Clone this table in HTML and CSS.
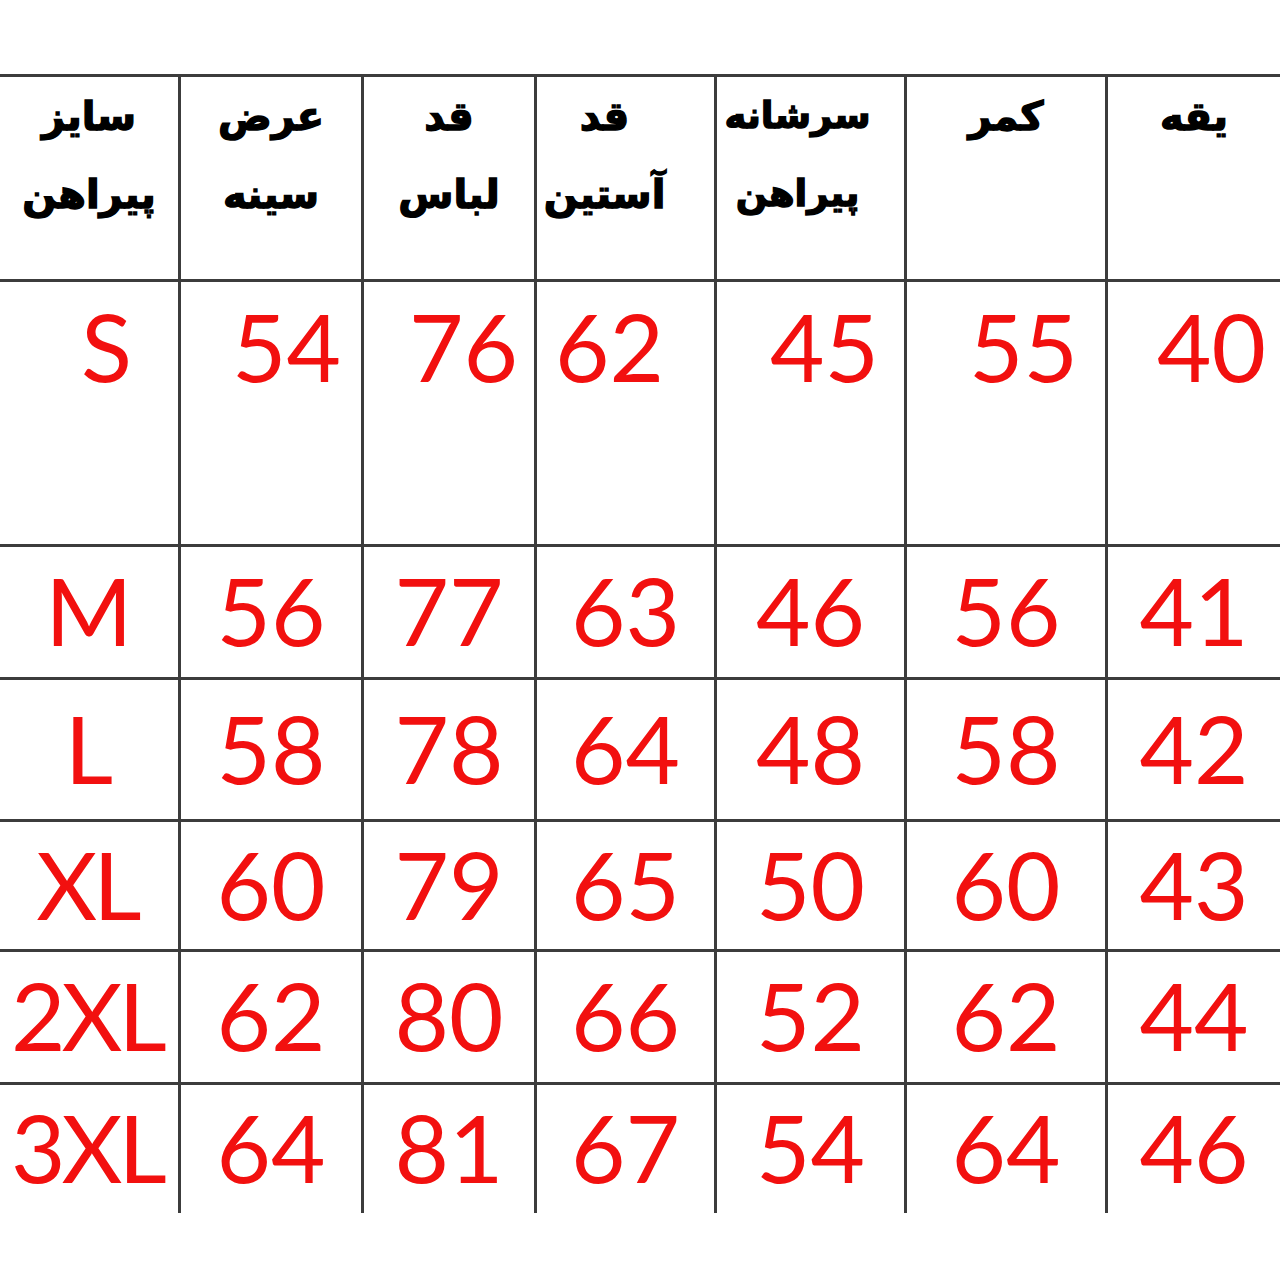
FILE: index.html
```html
<!DOCTYPE html>
<html lang="fa">
<head>
<meta charset="utf-8">
<title>جدول سایز پیراهن</title>
<link rel="stylesheet" href="styles.css">
</head>
<body>
<div class="chart">
  <div class="cell head"><span class="hl">سایز</span><span class="hl">پیراهن</span></div>
  <div class="cell head"><span class="hl">عرض</span><span class="hl">سینه</span></div>
  <div class="cell head"><span class="hl">قد</span><span class="hl">لباس</span></div>
  <div class="cell head shift-a"><span class="hl">قد</span><span class="hl">آستین</span></div>
  <div class="cell head shift-b"><span class="hl">سرشانه</span><span class="hl">پیراهن</span></div>
  <div class="cell head"><span class="hl">کمر</span></div>
  <div class="cell head last-col"><span class="hl">یقه</span></div>

  <div class="cell val size top r50">S</div>
  <div class="cell val top r20">54</div>
  <div class="cell val top r16">76</div>
  <div class="cell val top l18">62</div>
  <div class="cell val top r25">45</div>
  <div class="cell val top r27">55</div>
  <div class="cell val top r14 last-col">40</div>

  <div class="cell val size">M</div>
  <div class="cell val">56</div>
  <div class="cell val">77</div>
  <div class="cell val">63</div>
  <div class="cell val">46</div>
  <div class="cell val">56</div>
  <div class="cell val last-col">41</div>

  <div class="cell val size">L</div>
  <div class="cell val">58</div>
  <div class="cell val">78</div>
  <div class="cell val">64</div>
  <div class="cell val">48</div>
  <div class="cell val">58</div>
  <div class="cell val last-col">42</div>

  <div class="cell val size">XL</div>
  <div class="cell val">60</div>
  <div class="cell val">79</div>
  <div class="cell val">65</div>
  <div class="cell val">50</div>
  <div class="cell val">60</div>
  <div class="cell val last-col">43</div>

  <div class="cell val size">2XL</div>
  <div class="cell val">62</div>
  <div class="cell val">80</div>
  <div class="cell val">66</div>
  <div class="cell val">52</div>
  <div class="cell val">62</div>
  <div class="cell val last-col">44</div>

  <div class="cell val size last-row">3XL</div>
  <div class="cell val last-row">64</div>
  <div class="cell val last-row">81</div>
  <div class="cell val last-row">67</div>
  <div class="cell val last-row">54</div>
  <div class="cell val last-row">64</div>
  <div class="cell val last-row last-col">46</div>
</div>
</body>
</html>
```

FILE: styles.css
```css
html, body {
  margin: 0;
  padding: 0;
  background: #ffffff;
}

body {
  width: 1280px;
  height: 1280px;
  overflow: hidden;
}

.chart {
  margin-top: 74px;
  display: grid;
  grid-template-columns: 181px 183px 173px 180px 190px 201px 172px;
  grid-template-rows: 205px 265px 133px 142px 130px 133px 128px;
  border-top: 3px solid #3c3c3c;
}

.cell {
  box-sizing: border-box;
  border-right: 3px solid #3c3c3c;
  border-bottom: 3px solid #3c3c3c;
  display: flex;
  align-items: center;
  justify-content: center;
  min-width: 0;
  overflow: hidden;
}

.cell.last-col {
  border-right: none;
}

.cell.last-row {
  border-bottom: none;
}

.head {
  flex-direction: column;
  justify-content: flex-start;
  padding-top: 0;
  font-family: "DejaVu Sans", sans-serif;
  font-weight: bold;
  font-size: 40px;
  line-height: 78px;
  color: #000;
  direction: rtl;
  -webkit-text-stroke: 1.4px #000;
}

.hl {
  display: block;
  white-space: nowrap;
}

.shift-a {
  padding-right: 42px;
}

.shift-b {
  padding-right: 26px;
  font-size: 37px;
}

.val {
  font-family: "Lato", sans-serif;
  font-size: 94px;
  line-height: 1;
  color: #f2100f;
  padding-bottom: 4px;
}

.val.size {
  letter-spacing: -4px;
  padding-right: 4px;
}

.val.top {
  align-items: flex-start;
  padding-top: 17px;
  padding-bottom: 0;
}

.val.size.r50 { padding-right: 50px; }

.r50 { justify-content: flex-end; padding-right: 50px; }
.r20 { justify-content: flex-end; padding-right: 20px; }
.r16 { justify-content: flex-end; padding-right: 16px; }
.l18 { justify-content: flex-start; padding-left: 18px; }
.r25 { justify-content: flex-end; padding-right: 25px; }
.r27 { justify-content: flex-end; padding-right: 27px; }
.r14 { justify-content: flex-end; padding-right: 14px; }
```
